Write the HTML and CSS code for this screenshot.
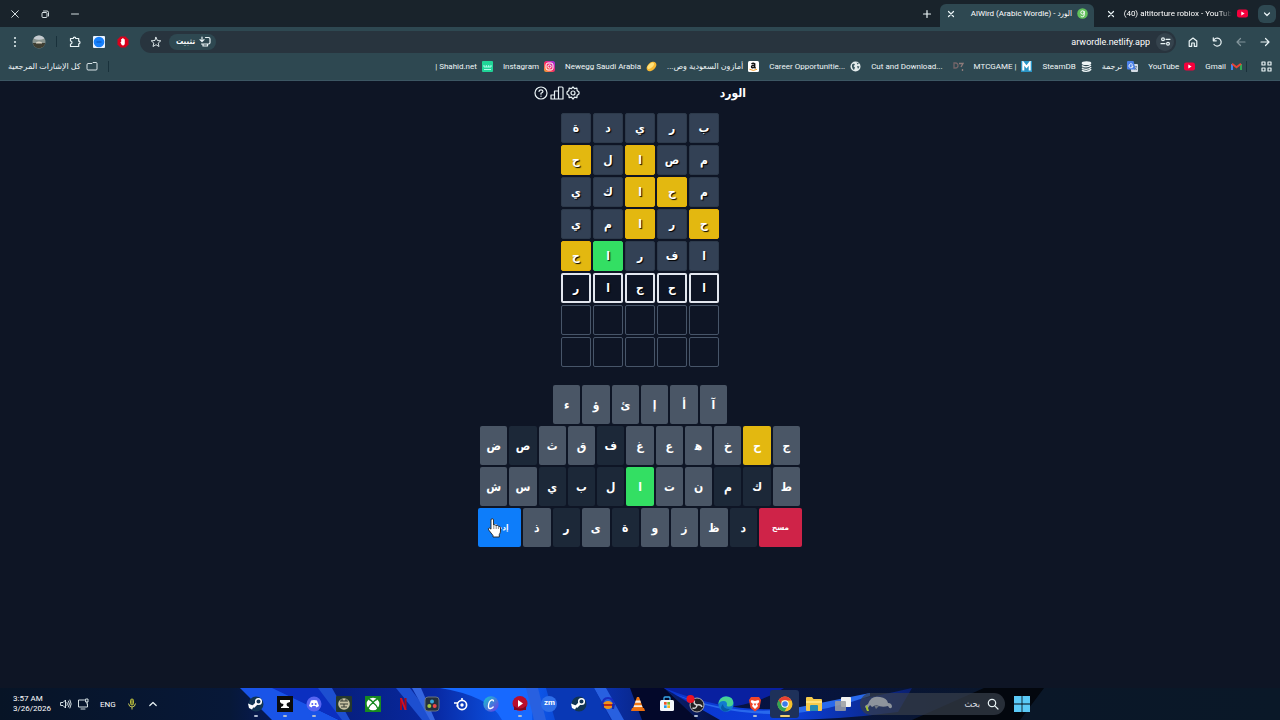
FILE: index.html
```html
<!DOCTYPE html>
<html lang="ar" dir="rtl">
<head>
  <meta charset="UTF-8">
  <meta name="viewport" content="width=device-width, initial-scale=1.0">
  <title>AlWird (Arabic Wordle) - الورد</title>
  <link rel="stylesheet" href="styles.css">
</head>
<body>
  <header class="browser">
    <div class="tabs">
      <button class="tab-search" aria-label="Search tabs"><svg width="10" height="10" viewBox="0 0 10 10"><path class="line" d="M2.500 4 5 6.500 7.500 4"/></svg></button>
      <div class="tab">
        <svg width="11" height="11" viewBox="0 0 11 11"><rect y="1.500" width="11" height="8" rx="2.200" fill="#f5003c"/><path d="M4.300 3.600v3.800L7.600 5.500z" fill="#fff"/></svg>
        <span class="tab-title fade" dir="ltr">(40) altitorture roblox - YouTub</span>
        <button class="icon-btn" aria-label="Close tab"><svg width="8" height="8" viewBox="0 0 8 8"><path class="line" d="M1.500 1.500l5 5M6.500 1.500l-5 5"/></svg></button>
      </div>
      <div class="tab active">
        <svg width="11" height="11" viewBox="0 0 11 11"><circle cx="5.500" cy="5.500" r="5.300" fill="#62c15c"/><circle cx="5.500" cy="4.500" r="1.700" fill="none" stroke="#fff"/><path d="M7.200 3v4q0 1.800-1.800 1.800-1.300 0-1.700-.8" fill="none" stroke="#fff"/></svg>
        <span class="tab-title" dir="ltr">AlWird (Arabic Wordle) - الورد</span>
        <button class="icon-btn" aria-label="Close tab"><svg width="8" height="8" viewBox="0 0 8 8"><path class="line" d="M1.500 1.500l5 5M6.500 1.500l-5 5"/></svg></button>
      </div>
      <button class="icon-btn new-tab" aria-label="New tab"><svg width="10" height="10" viewBox="0 0 10 10"><path class="line" d="M5 1.500v7M1.500 5h7"/></svg></button>
      <div class="window-buttons">
        <button class="icon-btn" aria-label="Minimize"><svg width="10" height="10" viewBox="0 0 10 10"><path class="thin" d="M1.500 5h7"/></svg></button>
        <button class="icon-btn" aria-label="Restore"><svg width="10" height="10" viewBox="0 0 10 10"><rect class="thin" x="2" y="3.500" width="5" height="5" rx="1"/><path class="thin" d="M3.500 2h3.500q1.500 0 1.500 1.500V7"/></svg></button>
        <button class="icon-btn" aria-label="Close"><svg width="10" height="10" viewBox="0 0 10 10"><path class="thin" d="M1.700 1.700l6.600 6.600M8.300 1.700L1.700 8.300"/></svg></button>
      </div>
    </div>

    <div class="toolbar">
      <button class="tool" aria-label="Forward"><svg width="12" height="12" viewBox="0 0 12 12"><path class="line" d="M2 6h8M6.500 2.500 10 6 6.500 9.500"/></svg></button>
      <button class="tool dim" aria-label="Back"><svg width="12" height="12" viewBox="0 0 12 12"><path class="line" d="M10 6H2M5.500 2.500 2 6l3.500 3.500"/></svg></button>
      <button class="tool" aria-label="Reload"><svg width="12" height="12" viewBox="0 0 12 12"><path class="line" d="M2.500 4.500A4 4 0 1 1 3 8.500M2.300 1.800v3h3"/></svg></button>
      <button class="tool" aria-label="Home"><svg width="12" height="12" viewBox="0 0 12 12"><path class="line" d="M2.200 5 6 2l3.800 3v5.300H7.300V7H4.700v3.300H2.200z"/></svg></button>
      <div class="omnibox">
        <button class="site-info" aria-label="Site information"><svg width="11" height="11" viewBox="0 0 11 11"><circle class="line" cx="3" cy="3.300" r="1.400"/><path class="line" d="M6 3.300h4M1 7.700h4"/><circle class="line" cx="8" cy="7.700" r="1.400"/></svg></button>
        <input class="address" type="text" value="arwordle.netlify.app" aria-label="Address" dir="ltr">
        <button class="install"><svg width="12" height="11" viewBox="0 0 12 11"><path class="line" d="M6.500 1.500h3q1.500 0 1.500 1.500v3.500q0 1.500-1.500 1.500h-7M4 8v2h4.500V8M3 1v4.500M1 3.700l2 2 2-2"/></svg>تثبيت</button>
        <button class="icon-btn" aria-label="Bookmark"><svg width="12" height="12" viewBox="0 0 12 12"><path class="thin" d="M6 1.300 7.400 4.500l3.400.3-2.600 2.300.8 3.400-3-1.800-3 1.800.8-3.400L1.200 4.800l3.400-.3z"/></svg></button>
      </div>
      <button class="tool" aria-label="Ad blocker"><svg width="12" height="12" viewBox="0 0 12 12"><path d="M3.500.5h5l3 3v5l-3 3h-5l-3-3v-5z" fill="#d9001b"/><path d="M3.400 6.200 4.200 5.800V3h.9v2.300V2.300H6v3V2.600h.9v2.900V3.300h.9V7.500Q7.600 9.500 6 9.500 4.500 9.500 3.400 6.200" fill="#fff"/></svg></button>
      <button class="tool" aria-label="Extension"><svg width="12" height="12" viewBox="0 0 12 12"><rect width="12" height="12" rx="1" fill="#e8f2ff"/><circle cx="6" cy="6" r="5.300" fill="#1680fb"/><path d="M3.500 6h5" stroke="#0651b5"/></svg></button>
      <button class="tool" aria-label="Extensions"><svg width="12" height="12" viewBox="0 0 12 12"><path class="line" d="M1.500 2.500h2.700a1.300 1.300 0 0 1 2.600 0h2.900v2.700a1.300 1.300 0 0 1 0 2.600v2.700H1.500V8a1.500 1.500 0 0 0 0-3z"/></svg></button>
      <span class="divider wide"></span>
      <button class="tool" aria-label="Profile"><svg width="14" height="14" viewBox="0 0 14 14"><circle cx="7" cy="7" r="6.500" fill="#88938e"/><path d="M1.500 3.500A6.500 6.500 0 0 1 12.500 3.500Q7 6 1.500 3.500" fill="#c5cbd0"/><path d="M.7 8h12.600A6.500 6.500 0 0 1 2 11z" fill="#3e3e32"/><path d="M4 7.500q3-2 6 0v1H4z" fill="#d6d2c3"/></svg></button>
      <button class="tool" aria-label="Menu"><svg width="12" height="12" viewBox="0 0 12 12" fill="#eaf4f6"><circle cx="6" cy="2" r="1"/><circle cx="6" cy="6" r="1"/><circle cx="6" cy="10" r="1"/></svg></button>
    </div>

    <nav class="bookmarks" aria-label="Bookmarks">
      <button class="icon-btn" aria-label="Apps"><svg width="11" height="11" viewBox="0 0 11 11"><path class="line" d="M1 1h3v3H1zM7 1h3v3H7zM1 7h3v3H1zM7 7h3v3H7z"/></svg></button>
      <span class="divider first"></span>
      <a href="#"><svg width="11" height="11" viewBox="0 0 11 11"><path d="M1 9V3" stroke="#4285f4" stroke-width="2"/><path d="M10 9V3" stroke="#34a853" stroke-width="2"/><path d="M1 2.700l4.500 3.600L10 2.700" fill="none" stroke="#ea4335" stroke-width="2"/></svg><bdi>Gmail</bdi></a>
      <a href="#"><svg width="11" height="11" viewBox="0 0 11 11"><rect y="1.500" width="11" height="8" rx="2.200" fill="#f5003c"/><path d="M4.300 3.600v3.800L7.600 5.500z" fill="#fff"/></svg><bdi>YouTube</bdi></a>
      <a href="#"><svg width="11" height="11" viewBox="0 0 11 11"><rect x="4" y="3" width="7" height="8" rx="1" fill="#d5dce5"/><path d="M0 1q0-1 1-1h5.500l2.200 8.500H1q-1 0-1-1z" fill="#4a80e8"/><path d="M5.500 3.500A2 2 0 1 0 6 5H4.300" fill="none" stroke="#fff" stroke-width=".9"/><path d="M7.500 5.500H10M9.500 5.500Q9 8 7.500 9M8 7l2 2" stroke="#60758c" fill="none" stroke-width=".7"/></svg><bdi>ترجمة</bdi></a>
      <a href="#"><svg width="11" height="11" viewBox="0 0 11 11"><ellipse cx="5.500" cy="2.200" rx="4.800" ry="1.900" fill="#eef5f6"/><path d="M1 4.500q1 1.400 4 1.400t5-1.800M1 6.800q1 1.500 4.200 1.500t5-2.200M1 9q1 1.300 4.200 1.300t5-2" fill="none" stroke="#eef5f6" stroke-width="1.300"/></svg><bdi>SteamDB</bdi></a>
      <a href="#"><svg width="11" height="11" viewBox="0 0 11 11"><rect width="11" height="11" fill="#2994c5"/><path d="M2.300 9.500V1.800l3.200 4 3.200-4v7.700" fill="none" stroke="#fff" stroke-width="2"/></svg><bdi dir="ltr">MTCGAME |</bdi></a>
      <a href="#" class="cut"><svg width="11" height="11" viewBox="0 0 11 11"><path d="M1 2v5h1.500Q5 7 5 4.500T2.500 2z" fill="none" stroke="#736569" stroke-width="1.300"/><path d="M6 2.500h4L8 6M9.500 8v2" fill="none" stroke="#8e7b7b" stroke-width="1.300"/></svg><bdi dir="ltr">Cut and Download...</bdi></a>
      <a href="#"><svg width="11" height="11" viewBox="0 0 11 11"><circle cx="5.500" cy="5.500" r="5" fill="#e4eced"/><path d="M2 3.500l2-1 1 1.300L3.500 5 5 6.500 4 9Q1.500 7 2 3.500M6.500 1.500l2.500 1-1.500 1zM7 5l2.500.5L8 8z" fill="#37545d"/></svg><bdi dir="ltr">Career Opportunitie...</bdi></a>
      <a href="#"><svg width="11" height="11" viewBox="0 0 11 11"><rect width="11" height="11" rx="1.500" fill="#fff"/><path d="M3.500 3Q5 1.500 6.700 2.700V7M6.700 4.300Q3.500 4 3.500 5.800T6.700 6M6.700 6.500l1 .8" fill="none" stroke="#111" stroke-width="1.400"/><path d="M1.500 8.300q4 2.200 7.500 0" fill="none" stroke="#f59b23"/></svg><bdi>أمازون السعودية وص...</bdi></a>
      <a href="#"><svg width="11" height="11" viewBox="0 0 11 11"><ellipse cx="5.500" cy="5.500" rx="5.600" ry="3.800" fill="#f6b833" transform="rotate(-42 5.500 5.500)"/><ellipse cx="4.700" cy="4.700" rx="4" ry="2" fill="#ffe27c" transform="rotate(-42 4.700 4.700)"/></svg><bdi>Newegg Saudi Arabia</bdi></a>
      <a href="#"><svg width="11" height="11" viewBox="0 0 11 11"><defs><linearGradient id="insta" x1="0" y1="1" x2="1" y2="0"><stop offset="0" stop-color="#ffb02e"/><stop offset=".5" stop-color="#f52969"/><stop offset="1" stop-color="#9b2df5"/></linearGradient></defs><rect width="11" height="11" rx="2.500" fill="url(#insta)"/><rect x="2" y="2" width="7" height="7" rx="2" fill="none" stroke="#fff"/><circle cx="5.500" cy="5.500" r="1.600" fill="none" stroke="#fff"/></svg><bdi>Instagram</bdi></a>
      <a href="#"><svg width="11" height="11" viewBox="0 0 11 11"><rect width="11" height="11" rx="1" fill="#20d497"/><path d="M2 4v2h7V4M4.300 4v2M6.700 4v2M2 8.500h7" stroke="#b9fff0" fill="none" stroke-width=".9"/></svg><bdi dir="ltr">| Shahid.net</bdi></a>
      <span class="divider last"></span>
      <a href="#"><svg width="12" height="11" viewBox="0 0 12 11"><path class="thin" d="M1 3.500q0-1 1-1h4l1-1h3q1 0 1 1V8q0 1-1 1H2q-1 0-1-1z"/></svg><bdi>كل الإشارات المرجعية</bdi></a>
    </nav>
  </header>

  <main class="game">
    <div class="game-header">
      <h1>الورد</h1>
      <div class="game-actions">
        <button class="icon-btn" aria-label="Settings"><svg width="14" height="14" viewBox="0 0 14 14"><path class="outline" d="M7 1 8.600 2.700l2.300-.5.2 2.300L13 6v2l-1.900 1.300-.2 2.400-2.300-.5L7 13l-1.600-1.800-2.300.5-.2-2.400L1 8V6l1.900-1.500.2-2.300 2.300.5z"/><circle class="outline" cx="7" cy="7" r="2"/></svg></button>
        <button class="icon-btn" aria-label="Statistics"><svg width="14" height="14" viewBox="0 0 14 14"><path class="outline" d="M1 9h3.500v4H1zM4.500 5h4v8h-4zM8.500 1.500q0-.5.500-.5h3q1 0 1 1v11H8.500z"/></svg></button>
        <button class="icon-btn" aria-label="Help"><svg width="14" height="14" viewBox="0 0 14 14"><circle class="outline" cx="7" cy="7" r="6"/><path class="outline" d="M5 5.300Q5.200 3.800 7 3.800t2 1.500Q9 6.500 7 7.300v.9M7 10v.3"/></svg></button>
      </div>
    </div>

    <div class="board">
      <div class="cell absent">ب</div><div class="cell absent">ر</div><div class="cell absent">ي</div><div class="cell absent">د</div><div class="cell absent">ة</div>
      <div class="cell absent">م</div><div class="cell absent">ص</div><div class="cell present">ا</div><div class="cell absent">ل</div><div class="cell present">ح</div>
      <div class="cell absent">م</div><div class="cell present">ح</div><div class="cell present">ا</div><div class="cell absent">ك</div><div class="cell absent">ي</div>
      <div class="cell present">ح</div><div class="cell absent">ر</div><div class="cell present">ا</div><div class="cell absent">م</div><div class="cell absent">ي</div>
      <div class="cell absent">ا</div><div class="cell absent">ف</div><div class="cell absent">ر</div><div class="cell correct">ا</div><div class="cell present">ح</div>
      <div class="cell filled">ا</div><div class="cell filled">ح</div><div class="cell filled">ج</div><div class="cell filled">ا</div><div class="cell filled">ر</div>
      <div class="cell"></div><div class="cell"></div><div class="cell"></div><div class="cell"></div><div class="cell"></div>
      <div class="cell"></div><div class="cell"></div><div class="cell"></div><div class="cell"></div><div class="cell"></div>
    </div>

    <div class="keyboard">
      <div class="key-row short">
        <button class="key">آ</button><button class="key">أ</button><button class="key">إ</button><button class="key">ئ</button><button class="key">ؤ</button><button class="key">ء</button>
      </div>
      <div class="key-row">
        <button class="key">ج</button><button class="key present">ح</button><button class="key">خ</button><button class="key">ه&zwj;</button><button class="key">ع</button><button class="key">غ</button><button class="key used">ف</button><button class="key">ق</button><button class="key">ث</button><button class="key used">ص</button><button class="key">ض</button>
      </div>
      <div class="key-row">
        <button class="key">ط</button><button class="key used">ك</button><button class="key used">م</button><button class="key">ن</button><button class="key">ت</button><button class="key correct">ا</button><button class="key used">ل</button><button class="key used">ب</button><button class="key used">ي</button><button class="key">س</button><button class="key">ش</button>
      </div>
      <div class="key-row long">
        <button class="key action delete">مسح</button><button class="key used">د</button><button class="key">ظ</button><button class="key">ز</button><button class="key">و</button><button class="key used">ة</button><button class="key">ى</button><button class="key used">ر</button><button class="key">ذ</button>
        <button class="key action enter">إدخل<svg class="pointer" width="16" height="20" viewBox="0 0 16 20"><path d="M4 2q0-1.300 1.200-1.300T6.500 2v5q1.500-.8 2.500.5 1.600-.6 2.300.7 2.200-.4 2.200 1.800v3q0 2-1.200 3.500V19H6v-1.500L1.700 12Q.8 10.500 2 10q.8-.3 2 1.200z" fill="#fff" stroke="#222" stroke-width=".9"/><path d="M6.800 7.500V11M9.200 8v3M11.400 8.700V11" stroke="#555" stroke-width=".7"/></svg></button>
      </div>
    </div>
  </main>

  <footer class="taskbar" dir="ltr">
    <svg class="wallpaper" viewBox="0 0 1280 32" preserveAspectRatio="none">
      <defs>
        <linearGradient id="bloom"><stop offset="0" stop-color="#071426"/><stop offset=".18" stop-color="#071838"/><stop offset=".24" stop-color="#061b70"/><stop offset=".34" stop-color="#0829a3"/><stop offset=".41" stop-color="#0d5df5"/><stop offset=".47" stop-color="#0a31ae"/><stop offset=".56" stop-color="#061244"/><stop offset=".66" stop-color="#07143a"/><stop offset=".8" stop-color="#0a1728"/><stop offset="1" stop-color="#0a1828"/></linearGradient>
        <linearGradient id="swoosh"><stop offset="0" stop-color="#0a35cf"/><stop offset=".5" stop-color="#0c40dc"/><stop offset="1" stop-color="#0a1f70"/></linearGradient>
      </defs>
      <rect width="1280" height="32" fill="url(#bloom)"/>
      <path d="M240 0h34l65 32h-67z" fill="#1954e8"/>
      <path d="M272 0h48l24 32h-5z" fill="#0b2fc0"/>
      <path d="M318 0h14l18 32h-8zM396 0h14l24 32h-12z" fill="#1d4fd0"/>
      <path d="M412 0h9l14 32h-5z" fill="#3566e0"/>
      <path d="M440 0q50 8 62 32h30V0z" fill="#1769ff"/>
      <path d="M526 0h12l8 32h-12zM594 0h12l18 32h-12z" fill="#2860e0"/>
      <path d="M546 0h48l17 32h-56z" fill="#0938b5"/>
      <path d="M630 0h34l34 32h-56z" fill="#03082a"/>
      <path d="M664 0h120q-30 20-84 22z" fill="#0920a0"/>
      <path d="M664 0q60 24 116 21T912 0l-14 24q-60 8-118 8h-60z" fill="url(#swoosh)"/>
      <path d="M674 6q60 22 116 15l80-16v3q-40 14-80 18-66 2-116-20" fill="#2869ed"/>
      <path d="M912 32 984 0h60L1020 32z" fill="#03070e"/>
    </svg>
    <div class="status">
      <div class="clock"><time>3:57 AM</time><time>3/26/2026</time></div>
      <svg width="12" height="12" viewBox="0 0 12 12"><path class="thin" d="M1 4.500h2L5.500 2v8L3 7.500H1zM7 4.500q1 1.500 0 3M8.500 3q2 3 0 6M10 2q2.500 4 0 8"/></svg>
      <svg width="12" height="12" viewBox="0 0 12 12"><path class="thin" d="M7.500 2h-6v7h9V6M4 11h4M9 1h2v3H9zM10 4v2"/></svg>
      <span class="lang">ENG</span>
      <svg class="mic" width="10" height="12" viewBox="0 0 10 12"><rect x="3.500" y="1" width="3" height="6" rx="1.500" fill="#727831" stroke="#b5b83b"/><path d="M1.500 5.500Q2 9 5 9t3.500-3.500M5 9v2.500" fill="none" stroke="#c8c956"/></svg>
      <svg width="10" height="10" viewBox="0 0 10 10"><path class="line" d="M1.800 6.500 5 3.500l3.200 3"/></svg>
    </div>
    <div class="dock">
      <div class="apps">
        <button class="app open" aria-label="Steam"><svg width="16" height="16" viewBox="0 0 16 16"><circle cx="8" cy="8" r="7.500" fill="#123553"/><path d="M0 7.500l6 2.500-2 3.500L1 12z" fill="#fff"/><path d="M5 11l5-5" stroke="#fff" stroke-width="3"/><circle cx="10.500" cy="5.500" r="2.800" fill="#123553" stroke="#fff" stroke-width="1.500"/></svg></button>
        <button class="app open" aria-label="Anvil"><svg width="16" height="16" viewBox="0 0 16 16"><rect width="16" height="16" fill="#0b0c0e"/><path d="M3 4h10v2q-3 .5-3.500 2l.5 2 2 1v1H4v-1l2-1 .5-2Q4 8 3 6z" fill="#fff"/></svg></button>
        <button class="app open" aria-label="Discord"><svg width="16" height="16" viewBox="0 0 16 16"><circle cx="8" cy="8" r="7.500" fill="#5865f2"/><path d="M5 4.500q3-1 6 0l2 5.500-2.500 1.500L9.500 10h-3l-1 1.500L3 10z" fill="#fff"/><circle cx="6.300" cy="8" r="1" fill="#5865f2"/><circle cx="9.700" cy="8" r="1" fill="#5865f2"/></svg></button>
        <button class="app" aria-label="Game launcher"><svg width="16" height="16" viewBox="0 0 16 16"><rect width="16" height="16" rx="1" fill="#25382d"/><circle cx="8" cy="8" r="5.800" fill="#c9c3a4"/><path d="M4 5h8M4 8h8M5 11h6" stroke="#343b32"/><path d="M6 3v2M10 3v2M8 8v3" stroke="#343b32"/></svg></button>
        <button class="app" aria-label="Xbox"><svg width="16" height="16" viewBox="0 0 16 16"><rect width="16" height="16" fill="#178a20"/><circle cx="8" cy="8" r="6.300" fill="#fff"/><path d="M3.500 3Q7 4.500 8 6.500q1-2 4.500-3.500M3 13q1.500-4 5-6.500 3.500 2.500 5 6.500" fill="none" stroke="#178a20" stroke-width="1.400"/></svg></button>
        <button class="app" aria-label="Netflix"><svg width="16" height="16" viewBox="0 0 16 16"><path d="M6 2v12M10.500 2v12" stroke="#a90719" stroke-width="2"/><path d="M5 2h2l4.500 12h-2z" fill="#d01127"/></svg></button>
        <button class="app" aria-label="DaVinci Resolve"><svg width="16" height="16" viewBox="0 0 16 16"><rect x="1" y="1" width="14" height="14" rx="3" fill="#24303d" stroke="#687482"/><circle cx="8" cy="5.500" r="2" fill="#38a9d9"/><circle cx="5.300" cy="10" r="2" fill="#a4c83a"/><circle cx="10.700" cy="10" r="2" fill="#ed4948"/></svg></button>
        <button class="app" aria-label="SteelSeries"><svg width="16" height="16" viewBox="0 0 16 16"><circle cx="9" cy="9" r="4.600" fill="none" stroke="#fff" stroke-width="1.700"/><circle cx="9" cy="9" r="1.700" fill="#fff"/><path d="M1 7h4M3.500 10h2M9 2v2.500" stroke="#fff" stroke-width="1.600"/></svg></button>
        <button class="app" aria-label="Canva"><svg width="16" height="16" viewBox="0 0 16 16"><defs><linearGradient id="canva" x2="1" y2="1"><stop stop-color="#15c7cf"/><stop offset="1" stop-color="#7036e4"/></linearGradient></defs><circle cx="8" cy="8" r="7.700" fill="url(#canva)"/><path d="M10.500 5.500Q10.500 3.500 8.500 4 6 5 5.500 9t2 3.500 3-2" fill="none" stroke="#fff" stroke-width="1.300"/></svg></button>
        <button class="app open" aria-label="Video player"><svg width="16" height="16" viewBox="0 0 16 16"><circle cx="8" cy="7.500" r="7.500" fill="#b90e2c"/><path d="M2 10q6 5 12 0v4H2z" fill="#7c0821"/><path d="M6 4v7l5-3.500z" fill="#fff"/></svg></button>
        <button class="app" aria-label="Zoom"><span class="zoom-logo">zm</span></button>
        <button class="app" aria-label="Steam"><svg width="16" height="16" viewBox="0 0 16 16"><circle cx="8" cy="8" r="7.500" fill="#123553"/><path d="M0 7.500l6 2.500-2 3.500L1 12z" fill="#fff"/><path d="M5 11l5-5" stroke="#fff" stroke-width="3"/><circle cx="10.500" cy="5.500" r="2.800" fill="#123553" stroke="#fff" stroke-width="1.500"/></svg></button>
        <button class="app" aria-label="Audacity"><svg width="16" height="16" viewBox="0 0 16 16"><path d="M2.500 9Q2.500 2 8 2t5.500 7" stroke="#172dc1" stroke-width="2" fill="none"/><ellipse cx="8" cy="9" rx="5" ry="4" fill="#f19319"/><path d="M4 9h8" stroke="#bd2b18" stroke-width="2"/><path d="M1 8h3v5H2zM12 8h3l-1 5h-2z" fill="#192ba7"/></svg></button>
        <button class="app" aria-label="VLC"><svg width="16" height="16" viewBox="0 0 16 16"><path d="M7 1h2l4 11H3z" fill="#f37a16"/><path d="M5.800 4.500h4.400l.8 2.300H5zM4.200 9.200h7.600l.6 1.800H3.600z" fill="#f6eee6"/><path d="M2 12h12l1 3H1z" fill="#ed7011"/></svg></button>
        <button class="app" aria-label="Store"><svg width="16" height="16" viewBox="0 0 16 16"><path d="M5 4V2q0-1 1-1h4q1 0 1 1v2" fill="none" stroke="#38a9ec" stroke-width="1.300"/><rect x="1" y="4" width="14" height="11" rx="1.500" fill="#f3f7fc"/><path d="M5 6h2.700v2.700H5z" fill="#ee5227"/><path d="M8.300 6H11v2.700H8.300z" fill="#7ab72e"/><path d="M5 9.300h2.700V12H5z" fill="#219eea"/><path d="M8.300 9.300H11V12H8.300z" fill="#f5b522"/></svg></button>
        <button class="app open" aria-label="OBS Studio"><svg width="20" height="18" viewBox="0 0 20 18"><circle cx="11" cy="10" r="7" fill="#202023" stroke="#b1aeb0"/><path d="M11 10Q7 9 8.500 5.500M11 10q4-1 5 2M11 10q-.5 4-4.500 3" fill="none" stroke="#d4d4d4" stroke-width="1.500"/><circle cx="4.500" cy="4" r="4" fill="#ed1223"/></svg></button>
        <button class="app" aria-label="Edge"><svg width="16" height="16" viewBox="0 0 16 16"><circle cx="8" cy="8" r="7.700" fill="#127bcf"/><path d="M.5 7Q2 .5 8 .5q7 0 7.300 6 0 4-4.300 4-3 0-2-2 0-4-4-3.500-3 0-4.500 3" fill="#48d394"/><path d="M5 8q0 5 7 5-3 3.500-7 2Q1 12 5 8" fill="#075aa8"/></svg></button>
        <button class="app open" aria-label="Brave"><svg width="16" height="16" viewBox="0 0 16 16"><path d="M4 1h8l2 3-1.500 8L8 15.500 3.500 12 2 4z" fill="#f0442b"/><path d="M4.500 4 8 5l3.500-1 .8 2L10 8l1 2-3 3-3-3 1-2-2.300-2z" fill="#fff"/><path d="M6.500 7.500h3L8 10z" fill="#f0442b"/></svg></button>
        <button class="app current" aria-label="Chrome"><svg width="16" height="16" viewBox="0 0 16 16"><circle cx="8" cy="8" r="7.500" fill="#f5c12c"/><path d="M8 8 1.600 4A7.500 7.500 0 0 0 7.500 15.500L11 9z" fill="#32a653"/><path d="M4.500 4.500h10Q12 .5 8 .5 4 .5 1.700 4l2.800 5z" fill="#e64033"/><circle cx="8" cy="8" r="3.700" fill="#fff"/><circle cx="8" cy="8" r="2.800" fill="#3b7be9"/></svg></button>
        <button class="app" aria-label="File Explorer"><svg width="16" height="16" viewBox="0 0 16 16"><path d="M0 2q0-1 1-1h5l1.500 2H15q1 0 1 1v10q0 1-1 1H1q-1 0-1-1z" fill="#f6ca4c"/><path d="M0 5h16v2H0z" fill="#ffe27c"/><path d="M4 10q0-1 1-1h6q1 0 1 1v5H4z" fill="#268cb2"/></svg></button>
        <button class="app" aria-label="Task view"><svg width="16" height="16" viewBox="0 0 16 16"><rect x="6" y="1" width="10" height="10" rx="1" fill="#f2f2f2"/><rect x="0" y="5" width="11" height="10" rx="1" fill="#9b9da1" fill-opacity=".85"/></svg></button>
      </div>
      <label class="search">
        <svg width="28" height="18" viewBox="0 0 28 18"><path d="M3 9Q6 0 15 2q7 1 8 6 4 0 4 4-2 3-4-1-6 2-12-1l-4 2-2-2-2 3q-3 1-3-2z" fill="#8e949c"/><path d="M9 10l2 4 3-3" fill="#707780"/><path d="M2 16q-2-4 0-6l2 6" fill="#a3c62f"/></svg>
        <input type="text" placeholder="بحث" dir="rtl" aria-label="بحث">
        <svg width="12" height="12" viewBox="0 0 12 12"><circle class="line" cx="5" cy="5" r="3.700"/><path class="line" d="M7.800 7.800 11 11"/></svg>
      </label>
      <button class="icon-btn" aria-label="Start"><svg width="16" height="16" viewBox="0 0 16 16" fill="#5bcaf7"><path d="M0 0h7.600v7.600H0zM8.400 0H16v7.600H8.400zM0 8.400h7.600V16H0zM8.400 8.400H16V16H8.400z"/></svg></button>
    </div>
  </footer>
</body>
</html>
```
FILE: styles.css
```css
* {
  box-sizing: border-box;
}
body {
  display: flex;
  flex-direction: column;
  min-height: 100vh;
  margin: 0;
  background-color: #0e1525;
  color: #fff;
  font-family: Roboto, "DejaVu Sans Condensed", "DejaVu Sans", sans-serif;
  font-size: 8px;
}
button, input {
  font-family: inherit;
  color: inherit;
  border: none;
  padding: 0;
  background: none;
}
button {
  cursor: pointer;
}
svg {
  display: block;
  flex: none;
}
.line, .thin, .outline {
  fill: none;
  stroke: #eaf4f6;
  stroke-width: 1.2;
  stroke-linecap: round;
  stroke-linejoin: round;
}
.thin {
  stroke-width: 0.9;
}
.icon-btn {
  display: flex;
  align-items: center;
  justify-content: center;
}

/* browser */
.browser {
  background-color: #2e4851;
  border-bottom: 1px solid #3c5663;
}
.tabs {
  display: flex;
  align-items: center;
  height: 27px;
  padding: 0 4px;
  background-color: #19232b;
}
.tab-search {
  display: flex;
  align-items: center;
  justify-content: center;
  width: 18px;
  height: 18px;
  margin-left: 4px;
  border-radius: 6px;
  background-color: #2e4851;
}
.tab {
  display: flex;
  align-items: center;
  gap: 5px;
  width: 154px;
  height: 23px;
  margin-top: 4px;
  padding: 0 6px 4px 7px;
}
.tab.active {
  margin-right: 6px;
  border-radius: 6px 6px 0 0;
  background-color: #2e4851;
}
.tab-title {
  flex: 1;
  overflow: hidden;
  white-space: nowrap;
  text-align: right;
}
.tab-title.fade {
  mask-image: linear-gradient(to right, #000 88%, transparent);
}
.new-tab {
  margin-right: 8px;
}
.window-buttons {
  display: flex;
  gap: 20px;
  margin-right: auto;
  padding-left: 6px;
}
.toolbar {
  display: flex;
  align-items: center;
  height: 29px;
  padding: 0 3px;
}
.tool {
  display: flex;
  align-items: center;
  justify-content: center;
  width: 24px;
  height: 22px;
}
.dim {
  opacity: 0.45;
}
.omnibox {
  display: flex;
  align-items: center;
  flex: 1;
  height: 22px;
  margin: 0 5px;
  padding: 0 2px 0 10px;
  border-radius: 11px;
  background-color: #28343e;
}
.site-info {
  display: flex;
  align-items: center;
  justify-content: center;
  width: 18px;
  height: 18px;
  border-radius: 50%;
  background-color: #35434d;
}
.address {
  flex: 1;
  padding: 0 6px;
  font-size: 9px;
  text-align: right;
}
.install {
  display: flex;
  align-items: center;
  gap: 4px;
  height: 16px;
  margin-left: 7px;
  padding: 0 5px 0 7px;
  border-radius: 8px;
  background-color: #2e4851;
  font-size: 8px;
  font-weight: bold;
}
.divider {
  width: 1px;
  height: 11px;
  background-color: #19313b;
}
.divider.wide {
  margin: 0 6px 0 5px;
}
.bookmarks {
  display: flex;
  align-items: center;
  gap: 10px;
  height: 24px;
  padding: 0 8px 3px;
  font-family: Roboto, "DejaVu Sans", sans-serif;
}
.bookmarks a {
  display: flex;
  align-items: center;
  gap: 5px;
  color: #f0f6f7;
  text-decoration: none;
  white-space: nowrap;
}
.bookmarks .cut {
  gap: 10px;
}
.divider.first {
  margin: 0 4px 0 -6px;
}
.divider.last {
  margin-right: auto;
}

/* game */
.game {
  display: flex;
  flex-direction: column;
  align-items: center;
  flex: 1;
  padding-top: 4px;
}
.game-header {
  display: flex;
  align-items: center;
  justify-content: space-between;
  width: 212px;
  height: 16px;
}
.game-header h1 {
  margin: 0;
  font-size: 12px;
  line-height: 16px;
}
.game-actions {
  display: flex;
  gap: 2px;
}
.board {
  display: grid;
  grid-template-columns: repeat(5, 30px);
  grid-auto-rows: 30px;
  gap: 2px;
  margin-top: 12px;
}
.cell {
  display: flex;
  align-items: center;
  justify-content: center;
  border: 1px solid #475569;
  border-radius: 2px;
  font-size: 12px;
  font-weight: bold;
  text-shadow: 1px 1px 1px #000;
}
.cell.filled {
  border: 2px solid #e3e7ef;
}
.cell.absent {
  border-color: #2d3a4b;
  background-color: #334155;
}
.cell.present, .key.present {
  border-color: #eab308;
  background-color: #e3b810;
}
.cell.correct, .key.correct {
  border-color: #33df63;
  background-color: #33df63;
}
.keyboard {
  display: flex;
  flex-direction: column;
  align-items: center;
  gap: 2px;
  margin-top: 18px;
}
.key-row {
  display: flex;
  gap: 2px;
  width: 320px;
}
.key-row.short {
  width: 174px;
}
.key-row.long {
  width: 324px;
}
.key {
  flex: 1;
  height: 39px;
  border-radius: 2px;
  background-color: #4a5666;
  font-size: 12px;
  font-weight: bold;
}
.key.used {
  background-color: #1c2838;
}
.key.action {
  position: relative;
  flex: 0 0 43px;
  font-size: 8px;
}
.key.delete {
  background-color: #cf2348;
}
.key.enter {
  background-color: #0d7dfa;
}
.pointer {
  position: absolute;
  top: 10px;
  left: 9px;
}

/* taskbar */
.taskbar {
  position: relative;
  display: grid;
  grid-template-columns: 1fr auto 1fr;
  height: 32px;
  background-color: #0a1728;
}
.wallpaper {
  position: absolute;
  inset: 0;
  width: 100%;
  height: 100%;
}
.status {
  position: relative;
  display: flex;
  align-items: center;
  gap: 5px;
  padding-left: 13px;
}
.clock {
  display: flex;
  flex-direction: column;
  width: 42px;
  line-height: 10px;
}
.lang {
  margin: 0 6px;
}
.mic {
  margin-right: 6px;
}
.dock {
  position: relative;
  display: flex;
  align-items: center;
  padding-right: 9px;
}
.apps {
  display: grid;
  grid-template-columns: repeat(21, 1fr);
  width: 617px;
}
.app {
  position: relative;
  display: flex;
  align-items: center;
  justify-content: center;
  height: 28px;
  border-radius: 3px;
}
.app.open::after, .app.current::after {
  content: "";
  position: absolute;
  bottom: 1px;
  width: 4px;
  height: 2px;
  border-radius: 1px;
  background-color: #aebad0;
}
.app.current {
  background-color: #1e315a;
}
.app.current::after {
  width: 10px;
  background-color: #f4cf70;
}
.zoom-logo {
  width: 16px;
  height: 16px;
  border-radius: 50%;
  background-color: #2d6ee8;
  font-size: 8px;
  font-weight: bold;
  line-height: 14px;
}
.search {
  display: flex;
  align-items: center;
  width: 145px;
  height: 22px;
  margin: 0 9px 0 2px;
  padding: 0 6px 0 5px;
  border-radius: 11px;
  background-color: rgba(55, 62, 74, 0.7);
}
.search input {
  flex: 1;
  min-width: 0;
  padding: 0 7px;
  font-size: 9px;
}
.search input::placeholder {
  color: #d9dce2;
}
```
